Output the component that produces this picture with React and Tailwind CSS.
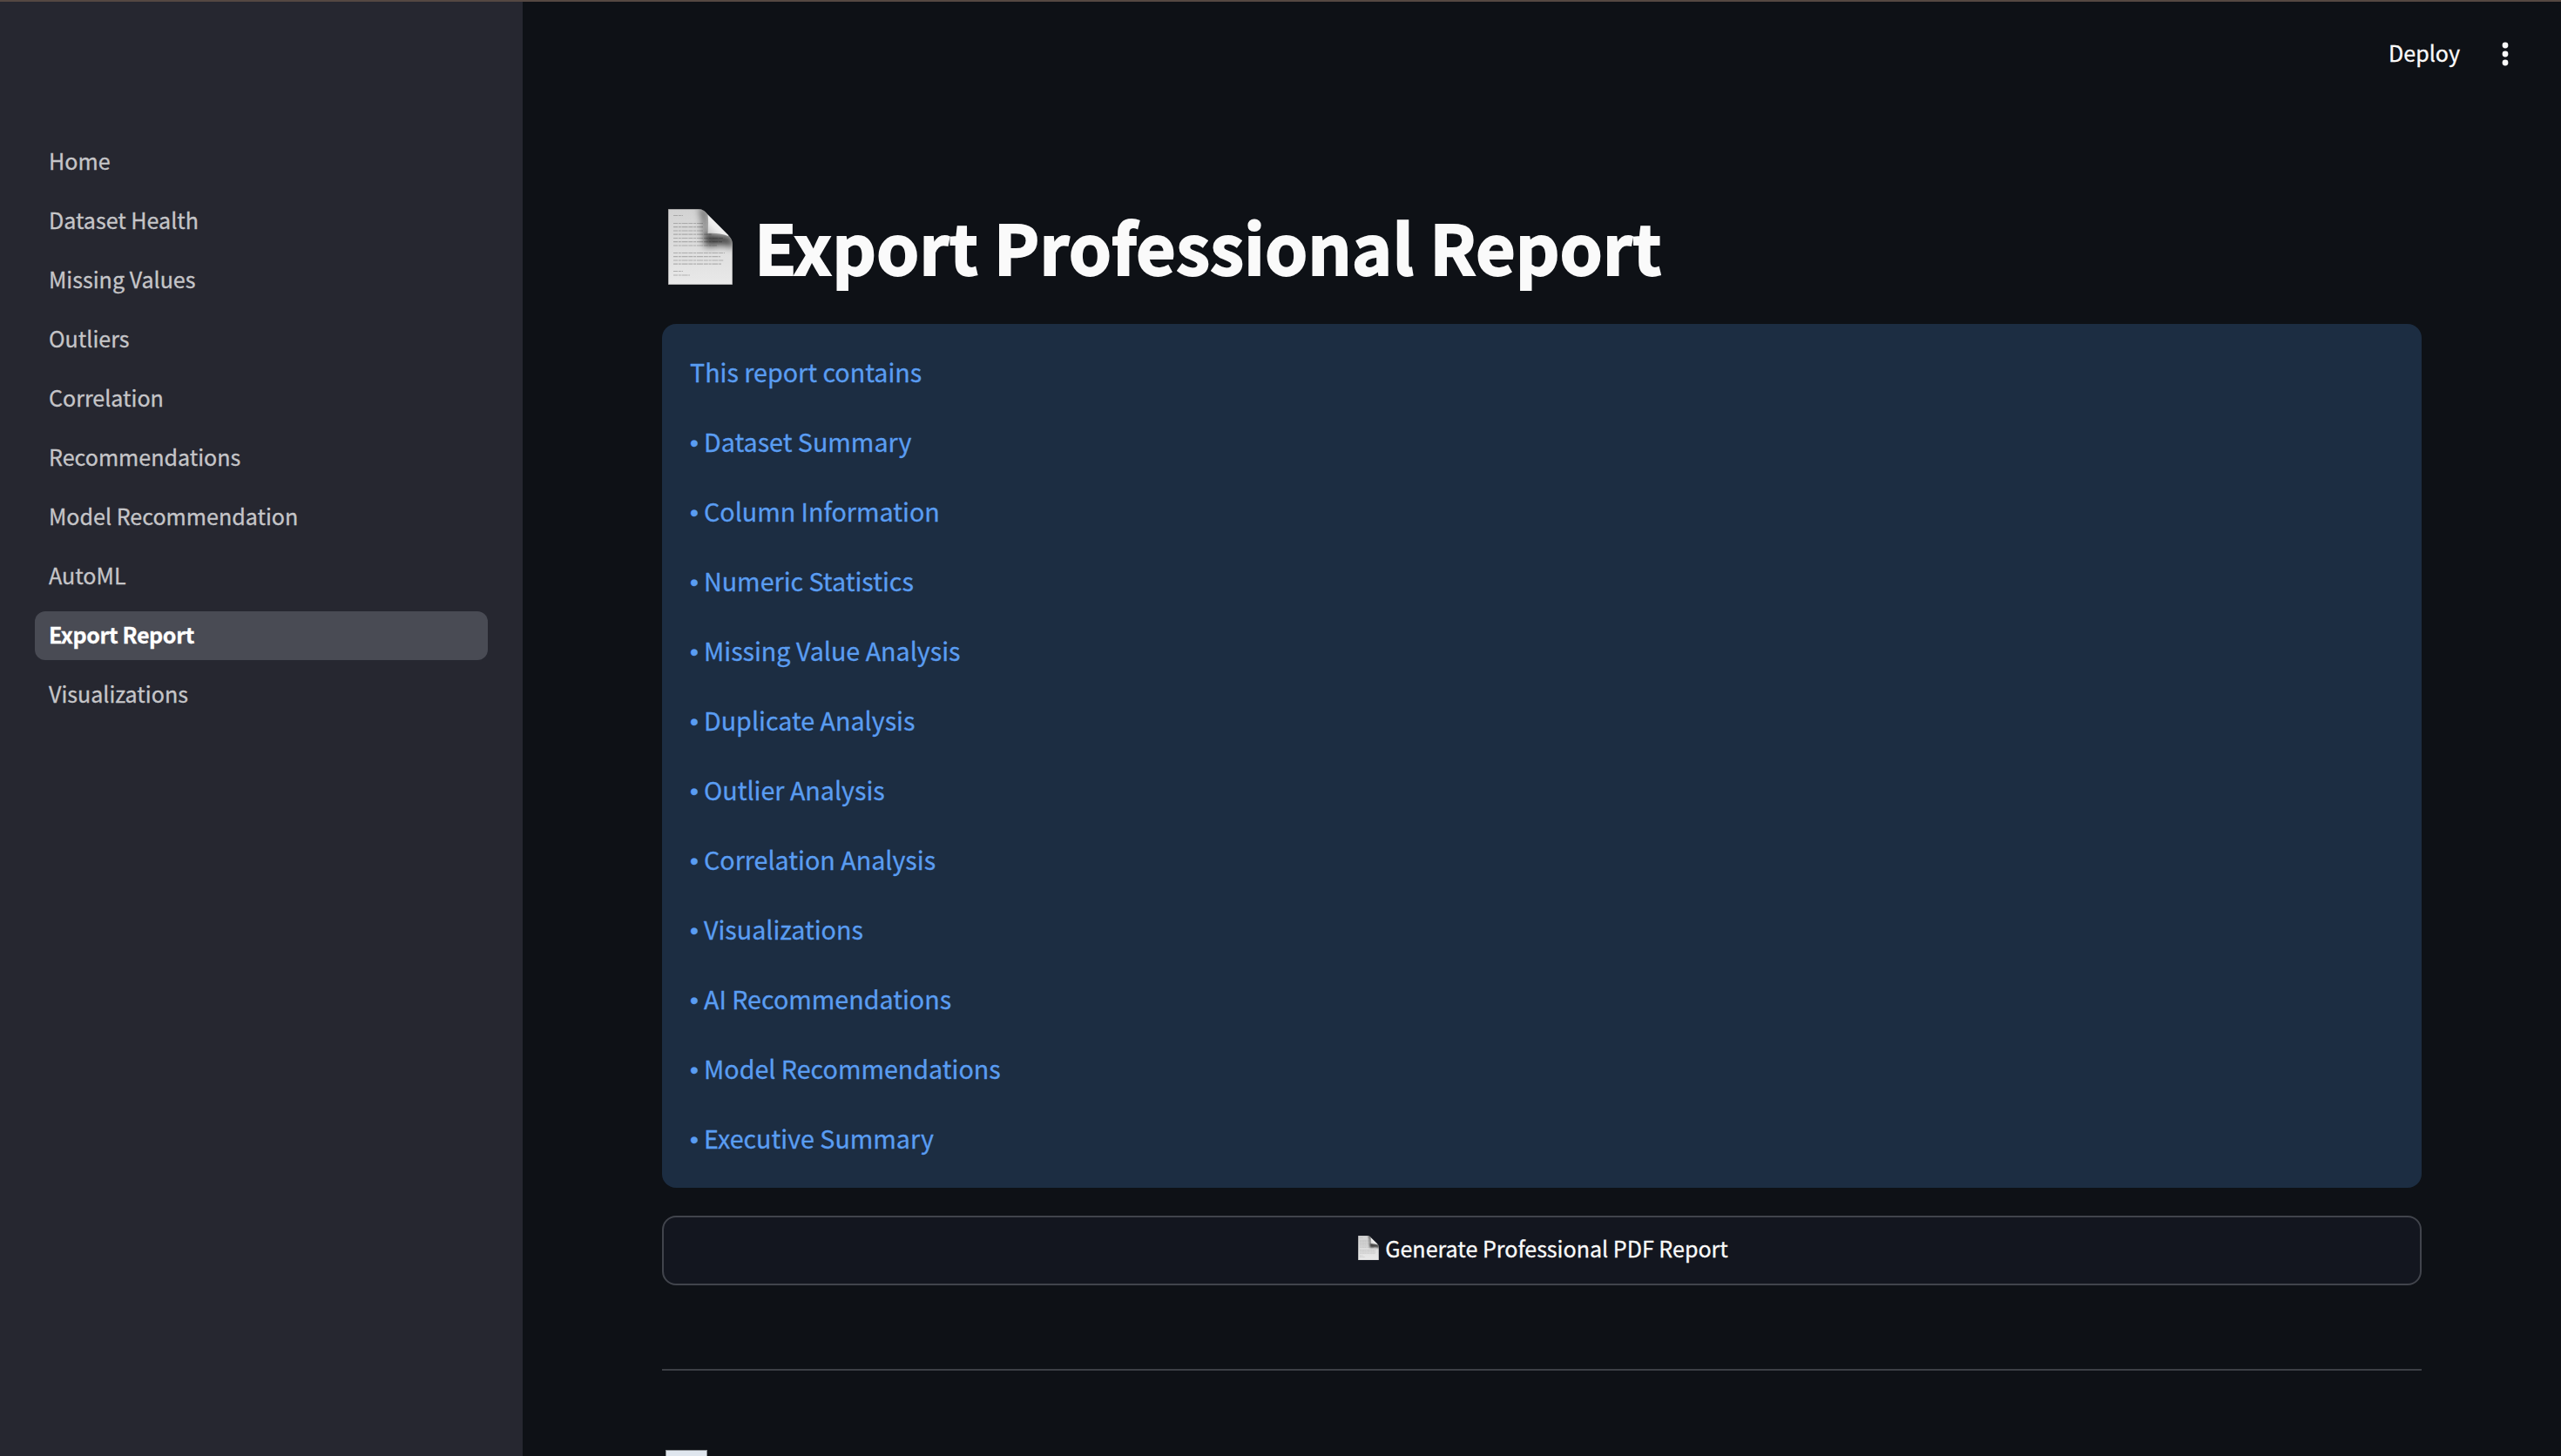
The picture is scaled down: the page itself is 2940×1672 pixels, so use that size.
import React from 'react';

const pages = [
  'Home',
  'Dataset Health',
  'Missing Values',
  'Outliers',
  'Correlation',
  'Recommendations',
  'Model Recommendation',
  'AutoML',
  'Export Report',
  'Visualizations',
];

const sections = [
  'Dataset Summary',
  'Column Information',
  'Numeric Statistics',
  'Missing Value Analysis',
  'Duplicate Analysis',
  'Outlier Analysis',
  'Correlation Analysis',
  'Visualizations',
  'AI Recommendations',
  'Model Recommendations',
  'Executive Summary',
];

// [y, width] of each written line on the page icon
const lines = [
  [7.5, 11],
  [16.5, 34], [20.7, 34], [25, 34], [29.2, 44], [33.5, 57], [37.7, 56], [42, 50],
  [50.5, 59], [54.7, 54], [59, 58], [63.2, 55],
  [71.5, 11], [76, 19],
];

const PageIcon = ({ id, className }) => (
  <svg viewBox="0 0 74 87" className={className} aria-hidden="true">
    <defs>
      <linearGradient id={`${id}-paper`} x1="0" y1="0" x2="0" y2="1">
        <stop offset="0" stopColor="#d2d2d2" />
        <stop offset="1" stopColor="#e9e9e9" />
      </linearGradient>
      <linearGradient id={`${id}-fold`} x1="0" y1="1" x2="0.6" y2="0.4">
        <stop offset="0" stopColor="#c4c4c4" />
        <stop offset="0.6" stopColor="#ececec" />
        <stop offset="1" stopColor="#f4f4f4" />
      </linearGradient>
      <filter id={`${id}-blur`} x="-50%" y="-50%" width="200%" height="200%">
        <feGaussianBlur stdDeviation="4" />
      </filter>
      <clipPath id={`${id}-clip`}>
        <path d="M0 0H34C40 0 43 3 46 7L68 29C72 33 74 36 74 42V87H0Z" />
      </clipPath>
    </defs>
    <g clipPath={`url(#${id}-clip)`}>
      <rect width="74" height="87" fill={`url(#${id}-paper)`} />
      {lines.map(([y, w]) => (
        <path key={y} d={`M6 ${y}h${w}`} stroke="#7c7c7c" strokeOpacity="0.5" strokeWidth="1.2" strokeDasharray="5 0.8 3 0.8 7 0.8" />
      ))}
      <path d="M36 -4L44 2L45 28L72 31L78 44L62 41L42 43L40 14Z" fill="#000" fillOpacity="0.72" filter={`url(#${id}-blur)`} />
      <path d="M45.5 6C46.5 14 46 21 45.5 28C53 27.500 61 28 69 31L70 29Z" fill={`url(#${id}-fold)`} />
      <path d="M0 0.5H74M0.5 0V87M73.5 40V87M0 86.5H74" stroke="#8a8a8a" strokeOpacity="0.6" fill="none" />
    </g>
  </svg>
);

const App = () => {
  const active = 'Export Report';

  return (
    <div className="flex flex-col w-[2940px] h-[1672px] overflow-hidden bg-[#0e1116] text-[#fafafa] font-['Noto_Sans_CJK_SC',sans-serif] [-webkit-text-stroke:0.3px]">
      <div className="h-[2px] shrink-0 bg-[#554842]" />
      <div className="flex flex-1 min-h-0">
        {/* Sidebar */}
        <aside className="w-[600px] shrink-0 bg-[#262730] px-10 pt-[156px]">
          <nav className="flex flex-col gap-3">
            {pages.map((page) => (
              <a
                key={page}
                className={`flex h-14 items-center rounded-xl px-4 pb-0.5 text-[25.07px] leading-none ${
                  page === active ? 'bg-[#494b54] font-bold tracking-[-0.4px] text-white' : 'text-[#c5c5c8]'
                }`}
              >
                {page}
              </a>
            ))}
          </nav>
        </aside>

        <div className="flex flex-1 flex-col">
          {/* Toolbar */}
          <header className="flex h-[120px] shrink-0 items-center justify-end pb-0.5 pr-[60px]">
            <button className="text-[25.07px] leading-none">Deploy</button>
            <svg viewBox="0 0 8 28" className="ml-12 mt-0.5 h-7 w-2" fill="currentColor">
              <circle cx="4" cy="4" r="3.4" />
              <circle cx="4" cy="14" r="3.4" />
              <circle cx="4" cy="24" r="3.4" />
            </svg>
          </header>

          {/* Report */}
          <main className="px-40 pt-[100px]">
            <h1 className="flex h-[150px] items-start">
              <PageIcon id="title" className="ml-[7px] mt-[18px] h-[87px] w-[74px]" />
              <span className="ml-[25px] text-[78.8px] font-bold leading-[120px] tracking-[0.02px] [-webkit-text-stroke:1.8px]">
                Export Professional Report
              </span>
            </h1>

            <div className="flex h-[992px] flex-col gap-8 rounded-2xl bg-[#1c2d42] px-8 pt-[31px] text-[28.66px] leading-[48px] text-[#5a9df2]">
              <p>This report contains</p>
              {sections.map((section) => (
                <p key={section} className="flex h-12">
                  <span className="w-4 pt-[2px] font-['Liberation_Sans',sans-serif] text-[28px]">•</span>
                  <span>{section}</span>
                </p>
              ))}
            </div>

            <button className="mt-8 flex h-20 w-full items-center justify-center rounded-2xl border-2 border-[#41444c] bg-[#13161f] pl-[3px]">
              <PageIcon id="button" className="mb-[6px] h-7 w-6" />
              <span className="ml-[7px] pb-1 text-[25.07px] leading-none">Generate Professional PDF Report</span>
            </button>

            <hr className="mt-24 border-t-2 border-[#3c3f45]" />

            <div className="ml-1 mt-[91px] h-12 w-12 border border-[#8d9195] bg-[#dfe6ee]" />
          </main>
        </div>
      </div>
    </div>
  );
};

export default App;
